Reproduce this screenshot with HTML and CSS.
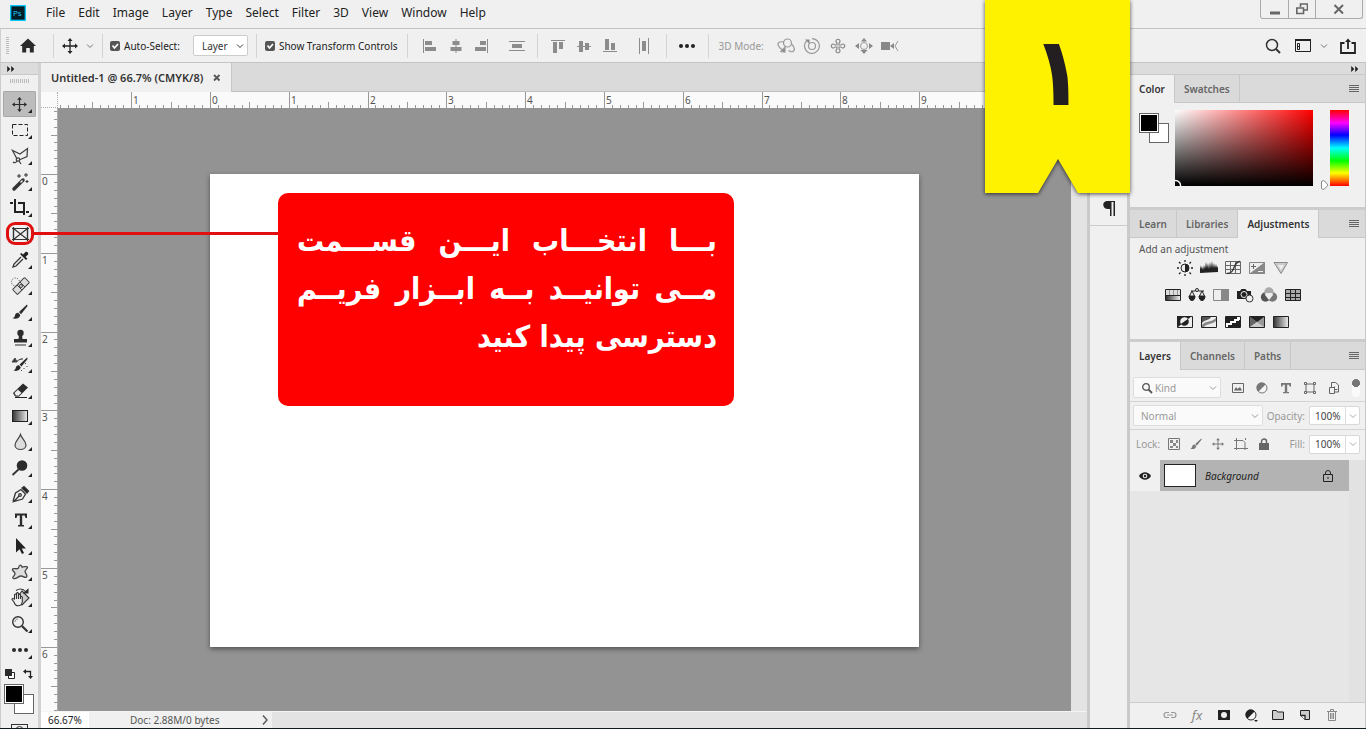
FILE: index.html
```html
<!DOCTYPE html>
<html lang="en">
<head>
<meta charset="utf-8">
<title>Untitled-1 @ 66.7% (CMYK/8)</title>
<link rel="stylesheet" href="styles.css">
</head>
<body>
<svg class="defs" aria-hidden="true">
  <defs>
    <linearGradient id="fade"><stop offset="0" stop-color="#333"/><stop offset="1" stop-color="#eee"/></linearGradient>
    <symbol id="chev" viewBox="0 0 8 8"><path d="M1 2.5 4 5.5 7 2.5" fill="none" stroke="currentColor"/></symbol>
    <symbol id="burger" viewBox="0 0 10 8"><path d="M0 .5h10M0 2.5h10M0 4.5h10M0 6.5h10" stroke="#666"/></symbol>
    <symbol id="twin" viewBox="0 0 8 6"><path d="M.5.5 3 3 .5 5.5zM4.500.5 7 3 4.500 5.500z" fill="#222" stroke="#222" stroke-width=".6"/></symbol>
    <symbol id="move" viewBox="0 0 16 16"><path d="M8 2v12M2 8h12" stroke="currentColor" stroke-width="1.3"/><path d="M8 0 10.500 3h-5zM8 16l2.500-3h-5zM0 8l3-2.500v5zM16 8l-3-2.500v5z" fill="currentColor"/></symbol>
    <symbol id="brush" viewBox="0 0 16 16"><path d="M15 .5 7 8l2 2.200L15.600 2zM6.300 8.800c-1.800-.2-3 1-3.300 2.600C2.700 13 1.800 13.700.5 14c2 1.600 7 1 7.800-3z" fill="currentColor"/></symbol>
    <symbol id="half" viewBox="0 0 12 12"><circle cx="6" cy="6" r="5" fill="#f4f4f4" stroke="currentColor"/><path d="M9.500 2.500A5 5 0 1 0 2.500 9.500z" fill="currentColor"/></symbol>
    <symbol id="check" viewBox="0 0 10 10"><path d="M2.500 4.500 4.500 7 8 3" fill="none" stroke="#fff" stroke-width="1.700"/></symbol>
  </defs>
</svg>

<header class="menubar">
  <svg class="logo" viewBox="0 0 16 16"><rect x=".7" y=".7" width="14.600" height="14.600" fill="#001d26" stroke="#00c8ff" stroke-width="1.300"/><text x="3" y="11" class="logo-text">Ps</text></svg>
  <nav class="menu">
    <a href="#">File</a><a href="#">Edit</a><a href="#">Image</a><a href="#">Layer</a><a href="#">Type</a><a href="#">Select</a><a href="#">Filter</a><a href="#">3D</a><a href="#">View</a><a href="#">Window</a><a href="#">Help</a>
  </nav>
  <div class="winctl">
    <button class="w-min" aria-label="Minimize"><svg width="12" height="12"><path d="M1 8.500h10v3H1z" fill="#666"/></svg></button>
    <button class="w-max" aria-label="Restore"><svg width="12" height="12" fill="none" stroke="#666" stroke-width="1.600"><path d="M4.500 4V1h7v6H8"/><path d="M.8 5h6.700v5.500H.8z"/></svg></button>
    <button class="w-close" aria-label="Close"><svg width="12" height="12"><path d="M1.500 2 10 10.500M10 2 1.500 10.500" stroke="#666" stroke-width="2"/></svg></button>
  </div>
</header>

<section class="options">
  <div class="grip-v"></div>
  <button class="ib home" aria-label="Home"><svg width="16" height="15"><path d="M8 .5 0 8h2.200v6.500h4V10h3.600v4.500h4V8H16z" fill="#2b2b2b"/></svg></button>
  <i class="sep s1"></i>
  <button class="ib preset" aria-label="Move tool preset"><svg width="16" height="16"><use href="#move"/></svg><svg class="grey" width="8" height="8"><use href="#chev"/></svg></button>
  <i class="sep s2"></i>
  <label class="check"><input type="checkbox" checked><svg width="10" height="10"><use href="#check"/></svg><span>Auto-Select:</span></label>
  <div class="select layer-select"><select aria-label="Auto-Select"><option>Layer</option></select><svg width="8" height="8"><use href="#chev"/></svg></div>
  <i class="sep s3"></i>
  <label class="check"><input type="checkbox" checked><svg width="10" height="10"><use href="#check"/></svg><span>Show Transform Controls</span></label>
  <i class="sep s4"></i>
  <div class="group align">
    <button class="ib" aria-label="Align left"><svg width="16" height="16" fill="#8c8c8c"><path d="M1 1h1v14H1zM3 3h7v4H3zM3 9h11v4H3z"/></svg></button>
    <button class="ib" aria-label="Align centers"><svg width="16" height="16" fill="#8c8c8c"><path d="M7.500 1h1v14h-1zM4.500 3h7v4h-7zM2.500 9h11v4h-11z"/></svg></button>
    <button class="ib" aria-label="Align right"><svg width="16" height="16" fill="#8c8c8c"><path d="M13 1h1v14h-1zM6 3h6v4H6zM1 9h11v4H1z"/></svg></button>
  </div>
  <button class="ib" aria-label="Distribute vertically"><svg width="16" height="16" fill="#8c8c8c"><path d="M0 3h16v1H0zM0 12h16v1H0zM3 6h10v4H3z"/></svg></button>
  <i class="sep s5"></i>
  <div class="group align">
    <button class="ib" aria-label="Align top"><svg width="16" height="16" fill="#8c8c8c"><path d="M1 2h14v1H1zM3 4h4v11H3zM9 4h4v7H9z"/></svg></button>
    <button class="ib" aria-label="Align middles"><svg width="16" height="16" fill="#8c8c8c"><path d="M1 8h14v1H1zM3 3h4v11H3zM9 5h4v7H9z"/></svg></button>
    <button class="ib" aria-label="Align bottom"><svg width="16" height="16" fill="#8c8c8c"><path d="M1 13h14v1H1zM3 1h4v11H3zM9 5h4v7H9z"/></svg></button>
  </div>
  <button class="ib dist" aria-label="Distribute horizontally"><svg width="16" height="16" fill="#8c8c8c"><path d="M3 0h1v16H3zM12 0h1v16h-1zM6 3h4v10H6z"/></svg></button>
  <i class="sep s6"></i>
  <button class="ib" aria-label="More options"><svg width="18" height="16" fill="#222"><circle cx="3" cy="8" r="2"/><circle cx="9" cy="8" r="2"/><circle cx="15" cy="8" r="2"/></svg></button>
  <i class="sep s7"></i>
  <span class="mode">3D Mode:</span>
  <div class="group modes">
    <button class="ib" aria-label="Orbit 3D"><svg width="18" height="16" fill="none" stroke="#999" stroke-width="1.200"><circle cx="10.500" cy="5" r="4"/><path d="M6.500 4C2 3 0 5 1.500 8c1 2 3 3.500 5 4.500M14.500 6c3 3 3.500 5.500 2 7-1 1-3.500.5-5-.5"/><path d="M4 13.500 8 9v5z" fill="#888"/></svg></button>
    <button class="ib" aria-label="Roll 3D"><svg width="18" height="16" fill="none" stroke="#999" stroke-width="1.200"><circle cx="9" cy="8" r="3.500"/><path d="M3.500 3A7.400 7.400 0 1 0 9 .6"/><path d="M2 1.500h4.500V6z" fill="#888" stroke="none"/></svg></button>
    <button class="ib" aria-label="Pan 3D"><svg width="18" height="16" fill="none" stroke="#888" stroke-width="1.200"><path d="M8 7V5a2 2 0 1 1 2 0v2h2a2 2 0 1 1 0 2h-2v2a2 2 0 1 1-2 0V9H6a2 2 0 1 1 0-2z"/></svg></button>
    <button class="ib" aria-label="Slide 3D"><svg width="18" height="16" fill="#888"><circle cx="9" cy="8" r="3.500" fill="none" stroke="#999"/><path d="M9 0l3 3.500H6zM9 16l3.500-4h-7zM0 8l4-3v6zM18 8l-4-3v6z"/></svg></button>
    <button class="ib" aria-label="Zoom 3D"><svg width="18" height="16" fill="#888"><path d="M0 4h9v8H0zM9 8l4-3v6z"/><path d="m17 3-3 5 3 5" fill="none" stroke="#999"/></svg></button>
  </div>
  <div class="right-tools">
    <button class="ib" aria-label="Search"><svg width="16" height="16" fill="none" stroke="#333"><circle cx="7" cy="7" r="5.500" stroke-width="1.500"/><path d="m11 11 4 4" stroke-width="2"/></svg></button>
    <button class="ib" aria-label="Workspace"><svg width="16" height="14" fill="none" stroke="#222"><path d="M.5 1.500h15v11H.5z"/><path d="M0 1h16" stroke-width="2"/><path d="M2.500 4.500h2v6h-2zM2.500 7.500h2"/></svg><svg class="grey" width="8" height="8"><use href="#chev"/></svg></button>
    <button class="ib" aria-label="Share"><svg width="16" height="16" fill="none" stroke="#222" stroke-width="1.800"><path d="M4.500 5H1v10h14V5h-3.500M8 11V2"/><path d="M5 4l3-3.500L11 4z" fill="#222" stroke="none"/></svg></button>
  </div>
</section>

<main class="work">
  <aside class="toolbar">
    <div class="strip"><svg width="8" height="6"><use href="#twin"/></svg></div>
    <div class="grip-h"></div>
    <div class="tools">
      <button class="tool on" aria-label="Move"><svg viewBox="0 0 20 20"><use href="#move" x="2" y="3" width="15" height="15"/></svg></button>
      <button class="tool" aria-label="Marquee"><svg viewBox="0 0 20 20"><rect x="2.500" y="4.500" width="15" height="11" fill="none" stroke="#222" stroke-dasharray="4 2"/></svg></button>
      <button class="tool" aria-label="Lasso"><svg viewBox="0 0 20 20" fill="none" stroke="#444" stroke-width="1.300"><path d="M7 13 2.500 4.500 10 8l7.500-5.500-.5 8L9 14"/><circle cx="8" cy="13.500" r="1.700"/><path d="M7 15c-1 2-3 2-4 1M9 15l2 3"/></svg></button>
      <button class="tool" aria-label="Magic wand"><svg viewBox="0 0 20 20"><path d="M4 17 13 8" stroke="#333" stroke-width="3.500" stroke-linecap="round"/><path d="m10.500 10.500 2-2" stroke="#eee" stroke-width="1.500"/><path d="M9 2v4M7 4h4M16 1v4M14 3h4M17 8v3M15.500 9.500h3" stroke="#333"/></svg></button>
      <button class="tool" aria-label="Crop"><svg viewBox="0 0 20 20" fill="none" stroke="#222" stroke-width="2"><path d="M0 5h3M5 1v13h9M8 5h6v12M16 14h3"/></svg></button>
      <button class="tool framed" aria-label="Frame"><svg viewBox="0 0 20 20" fill="none" stroke="#333" stroke-width="1.200"><path d="M3.500 4.500h14v11h-14zM3.500 4.500l14 11M17.500 4.500l-14 11"/><path d="M2 4.500h17M2 15.500h17M3.500 3v14M17.500 3v14"/></svg></button>
      <button class="tool" aria-label="Eyedropper"><svg viewBox="0 0 20 20"><path d="M11 7 4 14l-1 3 3-1 7-7" fill="#eee" stroke="#333" stroke-width="1.300"/><path d="m10 4 6 6 1.500-1.500L15.500 7 18 4.500C19 3 17 1 15.500 2L13 4.500 11.500 3z" fill="#222"/></svg></button>
      <button class="tool" aria-label="Healing brush"><svg viewBox="0 0 20 20" fill="none" stroke="#444"><rect x="2.500" y="6.500" width="17" height="7" rx="1" transform="rotate(-45 11 10)" fill="#ddd"/><path d="m7 9 5 5M10 6l5 5" /><circle cx="11" cy="10" r="1.500"/><circle cx="5.500" cy="6" r="4" stroke-dasharray="1 1.500"/></svg></button>
      <button class="tool" aria-label="Brush"><svg viewBox="0 0 20 20"><use href="#brush" x="2" y="2" width="16" height="16"/></svg></button>
      <button class="tool" aria-label="Clone stamp"><svg viewBox="0 0 20 20" fill="#2b2b2b"><circle cx="10.500" cy="5" r="3.200"/><path d="M9 7h3l.5 4H17v3.500H4V11h4.500zM5 16.500h11v1H5z"/></svg></button>
      <button class="tool" aria-label="History brush"><svg viewBox="0 0 20 20"><use href="#brush" x="3" y="3" width="15" height="15"/><path d="M3 7.500h4c2-2 4-3 6-2.500M2 8l3-4 2 4zM15.500 9v1M17 12v1M14 14v1M11 16.500h1" fill="#333" stroke="#444"/></svg></button>
      <button class="tool" aria-label="Eraser"><svg viewBox="0 0 20 20"><path d="m3 13 10-9.500 5 4-9 9H5z" fill="#2b2b2b"/><path d="m4 13 4-3.700L12 13l-3.500 3H6z" fill="#eee" stroke="#444"/><path d="M5 17.500h12" stroke="#222"/></svg></button>
      <button class="tool" aria-label="Gradient"><svg viewBox="0 0 20 20"><rect x="2.500" y="4.500" width="15" height="11" fill="url(#fade)" stroke="#222"/></svg></button>
      <button class="tool" aria-label="Blur"><svg viewBox="0 0 20 20"><path d="M10.500 2.500C9 7 5 9.500 5 13c0 6 11 6 11 0 0-3.500-4-6-5.500-10.500z" fill="#ddd" stroke="#444" stroke-width="1.200"/></svg></button>
      <button class="tool" aria-label="Dodge"><svg viewBox="0 0 20 20"><circle cx="12" cy="7.500" r="5.300" fill="#2b2b2b"/><path d="m9 11-6.500 6" stroke="#333" stroke-width="1.800"/></svg></button>
      <button class="tool" aria-label="Pen"><svg viewBox="0 0 20 20" fill="none" stroke="#333" stroke-width="1.300"><path d="M3 17.500 5.500 9 11 5.500 15.500 10 12.500 15 4 17.500l5-5.500"/><circle cx="10" cy="11" r="1.300"/><path d="m12 4 5 5 1.500-2-4.500-4.500z" fill="#222"/></svg></button>
      <button class="tool" aria-label="Type"><svg viewBox="0 0 20 20"><path d="M5 3.500h12V8h-1.500l-.8-2.500h-2.500V15H14v1.500H8V15h1.800V5.500H7.300L6.500 8H5z" fill="#2b2b2b"/></svg></button>
      <button class="tool" aria-label="Path selection"><svg viewBox="0 0 20 20"><path d="M6 2v14.500l3.500-3.200L12 18l2-1-2.200-4.500H16z" fill="#222"/></svg></button>
      <button class="tool" aria-label="Custom shape"><svg viewBox="0 0 20 20"><path d="M8.500 6C9 3 11 2 12 5c3 0 5-1 5.500 0S15 8 15 9.500c1 3 3 4 1.500 5.500s-3-1-5.500-1-5 3.500-7.500 2.500 2-3 1.500-5S1.500 8.500 2.500 7s4 1 6-1z" fill="#ddd" stroke="#444" stroke-width="1.300"/></svg></button>
      <button class="tool" aria-label="Rotate view"><svg viewBox="0 0 20 20" fill="#f0f0f0" stroke="#333" stroke-width="1.100"><path d="m12 3 7 7-7 7-6-6z" fill="#ccc"/><path d="M4 14 2 11.500c0-1.500 2-1 2.500 0V7c.5-1.500 1.800-1 2 0V5.500c.5-1.300 1.800-1 2 0V7c.5-1 1.800-.8 2 0v2c.7-.8 1.700-.5 1.800.5V14c-1 5-7 5-8.300 0z"/><path d="M6.500 7v4M8.500 7v4M10.500 8.500V11" /><path d="M6 2.500C9 .5 13 .5 16 4" fill="none"/><path d="M18 1.500V5h-4z" fill="#222"/></svg></button>
      <button class="tool" aria-label="Zoom"><svg viewBox="0 0 20 20" fill="none" stroke="#333"><circle cx="8" cy="8" r="5.300" stroke-width="1.400"/><path d="M5 8c0-2 1-3 3-3" stroke="#888"/><path d="m12 12 5.500 5.500" stroke-width="2.200"/></svg></button>
      <button class="tool" aria-label="Edit toolbar"><svg viewBox="0 0 20 20" fill="#2b2b2b"><circle cx="4" cy="10" r="2"/><circle cx="10" cy="10" r="2"/><circle cx="16" cy="10" r="2"/></svg></button>
    </div>
    <div class="mini">
      <button class="ib" aria-label="Default colors"><svg width="10" height="10"><path d="M3.500 3.500h6v6h-6z" fill="#fff" stroke="#222"/><path d="M0 0h7v7H0z" fill="#2b2b2b"/></svg></button>
      <button class="ib" aria-label="Swap colors"><svg width="10" height="10"><path d="M2 2.500h5.500V8" fill="none" stroke="#222" stroke-width="1.300"/><path d="M0 2.500 3 0v5zM7.500 10 5 7h5z" fill="#222"/></svg></button>
    </div>
    <div class="chips tool-chips"><button class="chip back" aria-label="Background color"></button><button class="chip fore" aria-label="Foreground color"></button></div>
    <button class="ib quick" aria-label="Quick mask"><svg width="17" height="12" fill="none" stroke="#333"><rect x=".5" y=".5" width="16" height="11"/><circle cx="8.500" cy="6" r="3.500"/></svg></button>
  </aside>

  <section class="document">
    <div class="doc-tabs"><div class="doc-tab"><span>Untitled-1 @ 66.7% (CMYK/8)</span><button class="ib" aria-label="Close document"><svg width="8" height="8"><path d="m1 1 5.500 5.500M6.500 1 1 6.500" stroke="#555" stroke-width="1.800"/></svg></button></div></div>
    <div class="corner"></div>
    <svg class="ruler-h" id="ruler-h"></svg>
    <svg class="ruler-v" id="ruler-v"></svg>
    <div class="canvas">
      <div class="page"><p class="callout" lang="fa" dir="rtl"><span class="full">بـــا انتخـــاب ایـــن قســـمت</span><span class="full">مــی توانیــد بــه ابــزار فریــم</span><span>دسترسی پیدا کنید</span></p></div>
    </div>
    <div class="scroll-v"></div>
    <footer class="status"><span class="zoom">66.67%</span><span class="info">Doc: 2.88M/0 bytes</span><button class="ib more" aria-label="Status menu"><svg width="8" height="10"><path d="m2 0.500 4 4.500-4 4.500" fill="none" stroke="#555" stroke-width="1.400"/></svg></button></footer>
  </section>

  <aside class="dock"><div class="strip"></div><div class="dock-group"><button class="ib" aria-label="Paragraph"><svg width="14" height="16"><path d="M7 1h6v15h-1.500V2H9.500v14H8V9H6C0 9-.5 1 5.500 1z" fill="#222"/></svg></button></div></aside>

  <aside class="panels">
    <div class="strip end"><svg width="8" height="6"><use href="#twin"/></svg></div>
    <section class="panel">
      <div class="tabs"><button class="tab on">Color</button><button class="tab">Swatches</button><button class="ib burger" aria-label="Color menu"><svg width="10" height="8"><use href="#burger"/></svg></button></div>
      <div class="color-body">
        <div class="chips"><button class="chip back" aria-label="Background"></button><button class="chip fore" aria-label="Foreground"></button></div>
        <div class="field"><svg width="8" height="8"><path d="M0 2.500A5 5 0 0 1 5.500 8" fill="none" stroke="#fff" stroke-width="1.500"/></svg></div>
        <svg class="pointer" width="8" height="10"><path d="M.5 1.500Q2 0 3.500 1L7 5 3.500 9Q2 10 .5 8.500z" fill="#fff" stroke="#888"/></svg>
        <div class="hue"></div>
      </div>
    </section>
    <section class="panel">
      <div class="tabs"><button class="tab">Learn</button><button class="tab">Libraries</button><button class="tab on">Adjustments</button><button class="ib burger" aria-label="Adjustments menu"><svg width="10" height="8"><use href="#burger"/></svg></button></div>
      <div class="adjust">
        <p>Add an adjustment</p>
        <div class="adj-row">
          <button class="ib" aria-label="Brightness"><svg width="18" height="16"><circle cx="9" cy="8" r="4" fill="#eee" stroke="#222"/><path d="M9 4a4 4 0 0 1 0 8z" fill="#222"/><path d="M9 0v2M9 14v2M1 8h2M15 8h2M3 2l1.500 1.500M15 2l-1.500 1.500M3 14l1.500-1.500M15 14l-1.500-1.500" stroke="#222" stroke-width="1.300"/></svg></button>
          <button class="ib" aria-label="Levels"><svg width="18" height="16"><path d="M0 13V5l1 4 1-3 1 4 1-5 1 4 1-7 1 6 1-5 1 6 1-7 1 6 1-7 1 7 1-5 1 5 1-4 1 4 1-2v6z" fill="#222"/></svg></button>
          <button class="ib" aria-label="Curves"><svg width="18" height="16" fill="none" stroke="#666"><path d="M1.500 1.500h15v12h-15zM6.500 1v13M11.500 1v13M1 5.500h16M1 9.500h16"/><path d="M3 13.500c9 0 5-11 13-12" stroke="#333" stroke-width="1.300"/></svg></button>
          <button class="ib" aria-label="Exposure"><svg width="18" height="16"><path d="M1.500 2.500h15v11h-15z" fill="#eee" stroke="#888"/><path d="M17 2v12H1z" fill="#888"/><path d="M3 6.500h5M5.500 4v5" stroke="#666"/><path d="M10 11.500h5" stroke="#eee"/></svg></button>
          <button class="ib" aria-label="Vibrance"><svg width="18" height="16"><path d="M2 2.500h13.500L9 13.500z" fill="#ccc" stroke="#888"/><path d="M6 5h6L9 10z" fill="#eee"/></svg></button>
        </div>
        <div class="adj-row">
          <button class="ib" aria-label="Hue"><svg width="18" height="16"><path d="M1.500 2.500h15v11h-15z" fill="#ddd" stroke="#222"/><path d="M2 9h14v4H2z" fill="url(#fade)"/><path d="M1 8.500h16" stroke="#222"/><path d="M5.500 3v5M9.500 3v5M13.500 3v5" stroke="#999"/></svg></button>
          <button class="ib" aria-label="Color balance"><svg width="18" height="16" fill="none" stroke="#222"><circle cx="9" cy="3" r="1.500"/><path d="M3 4h4.500M10.500 4H16M4 4 1.500 9M4 4l2.500 5M14 4l-2.500 5M14 4l2.500 5"/><path d="M1 9h6c0 6-6 6-6 0zM11 9h6c0 6-6 6-6 0z" fill="#222"/></svg></button>
          <button class="ib" aria-label="Black and white"><svg width="18" height="16"><path d="M1.500 2.500h15v11h-15z" fill="#eee" stroke="#888"/><path d="M9 2h8v12H9z" fill="#888"/></svg></button>
          <button class="ib" aria-label="Photo filter"><svg width="18" height="16"><path d="M1 4h3l1.500-2h4L11 4h4v8H1z" fill="#222"/><circle cx="8" cy="7.500" r="3" fill="#222" stroke="#eee"/><circle cx="13.500" cy="11.500" r="3.500" fill="#eee" stroke="#333"/></svg></button>
          <button class="ib" aria-label="Channel mixer"><svg width="18" height="16"><circle cx="5.500" cy="10" r="4.700" fill="#555"/><circle cx="12.500" cy="10" r="4.700" fill="#777"/><circle cx="9" cy="5" r="4.700" fill="#aaa"/><path d="M6 6h6l1 2-4 5-4-5z" fill="#eee"/></svg></button>
          <button class="ib" aria-label="Color lookup"><svg width="18" height="16"><path d="M1.500 2.500h15v11h-15z" fill="#aaa" stroke="#222"/><path d="M6.500 2v12M11.500 2v12M1 6.500h16M1 10.500h16" stroke="#222"/></svg></button>
        </div>
        <div class="adj-row">
          <button class="ib" aria-label="Invert"><svg width="18" height="16"><path d="M1.500 2.500h15v11h-15z" fill="#eee" stroke="#222"/><path d="M1 2h15L2 13z" fill="#222"/><path d="M5 10A4 4 0 0 1 12 5z" fill="#eee"/><path d="M5 10A4 4 0 0 0 12 5z" fill="#222"/></svg></button>
          <button class="ib" aria-label="Posterize"><svg width="18" height="16"><path d="M1.500 2.500h15v11h-15z" fill="#eee" stroke="#222"/><path d="M2 3h9C9 7 5 5 2 9z" fill="#555"/><path d="M2 11C6 6 11 9 16 4v3C12 11 7 9 4 13H2z" fill="#888"/></svg></button>
          <button class="ib" aria-label="Threshold"><svg width="18" height="16"><path d="M1.500 2.500h15v11h-15z" fill="#fff" stroke="#222"/><path d="M2 3h11v2h-3v2H6v2H2zM16 6v7H4v-2h4V9h4V7h3V6z" fill="#222"/></svg></button>
          <button class="ib" aria-label="Selective color"><svg width="18" height="16"><path d="M1.500 2.500h15v11h-15z" fill="#999" stroke="#222"/><path d="M2 3h14L9 8z" fill="#222"/><path d="M2 3l7 5-7 5z" fill="#666"/><path d="m2 13 7-5 7 5z" fill="#ccc"/></svg></button>
          <button class="ib" aria-label="Gradient map"><svg width="18" height="16"><path d="M1.500 2.500h15v11h-15z" fill="url(#fade)" stroke="#222"/></svg></button>
        </div>
      </div>
    </section>
    <section class="panel layers">
      <div class="tabs"><button class="tab on">Layers</button><button class="tab">Channels</button><button class="tab">Paths</button><button class="ib burger" aria-label="Layers menu"><svg width="10" height="8"><use href="#burger"/></svg></button></div>
      <div class="row filter">
        <div class="select kind"><svg width="12" height="12" fill="none" stroke="#555"><circle cx="5" cy="5" r="3.300" stroke-width="1.300"/><path d="m7.500 7.500 3.500 3.500" stroke-width="1.800"/></svg><select aria-label="Filter type"><option>Kind</option></select><svg width="8" height="8"><use href="#chev"/></svg></div>
        <div class="filter-icons">
          <button class="ib" aria-label="Pixel"><svg width="12" height="12"><path d="M.5 1.500h11v9H.5z" fill="none" stroke="#666"/><path d="M2 8.500 4 5l1.500 2L8 5l2 3.500z" fill="#666"/></svg></button>
          <button class="ib" aria-label="Adjustment"><svg width="12" height="12"><use href="#half"/></svg></button>
          <button class="ib" aria-label="Type layers"><svg width="12" height="12"><path d="M1 1h10v3.500H9.500L9 2.700H7.200V10H9v1.300H3V10h1.800V2.700H3l-.5 1.800H1z" fill="#777"/></svg></button>
          <button class="ib" aria-label="Shape layers"><svg width="12" height="12" fill="#f0f0f0" stroke="#666"><path d="M2 2h8v8H2z"/><path d="M.5.5h2v2h-2zM9.500.5h2v2h-2zM.5 9.500h2v2h-2zM9.500 9.500h2v2h-2z"/></svg></button>
          <button class="ib" aria-label="Smart objects"><svg width="12" height="12" fill="#f0f0f0" stroke="#666"><path d="M3.500.5h4L10.500 3v7h-7z"/><path d="M1.500 5.500h5v6h-5zM6.500 4.500v3h3"/></svg></button>
        </div>
        <button class="toggle" aria-label="Toggle filter"></button>
      </div>
      <div class="row">
        <div class="select blend"><select aria-label="Blend mode"><option>Normal</option></select><svg width="8" height="8"><use href="#chev"/></svg></div>
        <label class="fld" for="op">Opacity:</label>
        <div class="num"><input id="op" value="100%"><button class="ib" aria-label="Opacity slider"><svg width="8" height="8"><use href="#chev"/></svg></button></div>
      </div>
      <div class="row lock">
        <span>Lock:</span>
        <div class="lock-icons">
          <button class="ib" aria-label="Lock transparency"><svg width="12" height="12"><path d="M.5.5h11v11H.5z" fill="none" stroke="#777"/><path d="M2 2h3v3H2zM8 2h2v3H8zM5 5h3v3H5zM2 8h3v2H2zM8 8h2v2H8z" fill="#888"/></svg></button>
          <button class="ib" aria-label="Lock pixels"><svg width="12" height="14"><use href="#brush"/></svg></button>
          <button class="ib" aria-label="Lock position"><svg width="12" height="12"><use href="#move"/></svg></button>
          <button class="ib" aria-label="Lock artboard"><svg width="14" height="12" fill="none" stroke="#777"><path d="M2.500 0v12M0 2.500h9l2 2V12M0 10.500h14M11.500 0v2"/></svg></button>
          <button class="ib" aria-label="Lock all"><svg width="12" height="12"><path d="M1 5h10v7H1z" fill="#666"/><path d="M3.500 6V3.500a2.500 2.500 0 0 1 5 0V6" fill="none" stroke="#666" stroke-width="1.500"/></svg></button>
        </div>
        <label class="fld" for="fill">Fill:</label>
        <div class="num"><input id="fill" value="100%"><button class="ib" aria-label="Fill slider"><svg width="8" height="8"><use href="#chev"/></svg></button></div>
      </div>
      <div class="list">
        <div class="layer">
          <button class="ib eye" aria-label="Visibility"><svg width="12" height="8"><path d="M0 4C3-1 9-1 12 4 9 9 3 9 0 4z" fill="#222"/><circle cx="6" cy="4" r="2.300" fill="#eee"/><circle cx="6" cy="4" r="1.200" fill="#222"/></svg></button>
          <div class="layer-main"><span class="thumb"></span><span class="layer-name">Background</span><svg width="10" height="12"><path d="M.5 4.500h9v7h-9z" fill="none" stroke="#222"/><path d="M2.500 4.500V3a2.500 2.500 0 0 1 5 0v1.500M5 7v2" fill="none" stroke="#222"/></svg></div>
        </div>
      </div>
      <div class="actions">
        <button class="ib" aria-label="Link layers"><svg width="14" height="12" fill="none" stroke="#999" stroke-width="1.200"><path d="M6 3.500H3.500a2.500 2.500 0 0 0 0 5H6M8 3.500h2.500a2.500 2.500 0 0 1 0 5H8M4 6h6"/></svg></button>
        <button class="ib fx" aria-label="Layer style">fx</button>
        <button class="ib" aria-label="Add mask"><svg width="14" height="12"><path d="M1 1h12v10H1z" fill="#222"/><circle cx="7" cy="6" r="3" fill="#f0f0f0"/></svg></button>
        <button class="ib" aria-label="New adjustment"><svg width="14" height="14"><use href="#half" width="12" height="12" x="1" y="1"/><path d="M10 12h4l-2 2z" fill="#222"/></svg></button>
        <button class="ib" aria-label="New group"><svg width="14" height="12"><path d="M1.500 10.500v-9h4l1 1.500h6v7.500z" fill="#ccc" stroke="#222"/></svg></button>
        <button class="ib" aria-label="New layer"><svg width="14" height="12"><path d="M2.500 1.500h9v9H7L2.500 6.500z" fill="#ccc" stroke="#222"/><path d="M2.500 6.500H7v4" fill="#fff" stroke="#222" stroke-width="1.300"/></svg></button>
        <button class="ib" aria-label="Delete layer"><svg width="14" height="12" fill="none" stroke="#888"><path d="M2 2.500h10M5.500 2V.5h3V2M3.500 3v8.500h7V3M5.500 4v6M7 4v6M8.500 4v6"/></svg></button>
      </div>
    </section>
  </aside>
</main>

<div class="ribbon"><svg viewBox="0 0 145 193"><path d="M0 0h145v193H93L73 159 53 193H0z" fill="#fff200"/></svg><span lang="fa">۱</span></div>
<i class="ring"></i><i class="leader"></i>
<script src="rulers.js"></script>
</body>
</html>
```
FILE: rulers.js
```js
const NS = "http://www.w3.org/2000/svg";
const UNIT = 78.8;

function drawRuler(id, origin, vertical) {
  const svg = document.getElementById(id);
  const box = svg.getBoundingClientRect();
  const length = vertical ? box.height : box.width;
  const add = (tag, attrs, text) => {
    const el = document.createElementNS(NS, tag);
    for (const k in attrs) el.setAttribute(k, attrs[k]);
    if (text !== undefined) el.textContent = text;
    svg.appendChild(el);
  };
  svg.replaceChildren();
  for (let i = -30; ; i++) {
    const p = Math.round(origin + i * UNIT / 10);
    if (p > length) break;
    if (p < 0) continue;
    const size = i % 10 === 0 ? 16 : i % 5 === 0 ? 6 : 3;
    add("rect", vertical
      ? { x: 16 - size, y: p, width: size, height: 1 }
      : { x: p, y: 16 - size, width: 1, height: size });
    if (i % 10 === 0 && p + 14 < length) {
      add("text", vertical ? { x: 1, y: p + 11 } : { x: p + 2, y: 12 }, Math.abs(i / 10));
    }
  }
}

function drawRulers() {
  drawRuler("ruler-h", 152, false);
  drawRuler("ruler-v", 66, true);
}

drawRulers();
window.addEventListener("resize", drawRulers);
```
FILE: styles.css
```css
* { box-sizing: border-box; }
html, body { height: 100%; }
body {
  margin: 0;
  display: flex;
  flex-direction: column;
  position: relative;
  overflow: hidden;
  background: #f0f0f0;
  border-bottom: 1px solid #101c20;
  font: 10px/14px "Noto Sans", "Open Sans", sans-serif;
  color: #333;
}
button, input, select { font: inherit; color: inherit; }
button { padding: 0; border: 0; background: none; }
svg { display: block; flex: none; }
.defs { position: absolute; width: 0; height: 0; }
.ib { display: flex; align-items: center; justify-content: center; color: #222; flex: none; }
.grey { color: #777; }

/* Menu bar */
.menubar { display: flex; flex: none; height: 29px; border-bottom: 1px solid #c4c4c4; padding: 0 3px 0 10px; align-items: flex-start; }
.logo { width: 16px; height: 16px; margin-top: 5px; }
.logo-text { font: 8px "Open Sans", sans-serif; fill: #26c9ff; }
.menu { display: flex; gap: 13px; margin: 5px auto 0 20px; font-size: 12px; line-height: 16px; }
.menu a { color: #222; text-decoration: none; }
.winctl { display: flex; height: 19px; border: 1px solid #aaa; border-top: 0; border-radius: 0 0 3px 3px; }
.winctl button { display: flex; align-items: center; justify-content: center; width: 27px; }
.winctl button + button { border-left: 1px solid #aaa; }
.winctl .w-close { width: 47px; }

/* Options bar */
.options { display: flex; flex: none; align-items: center; height: 34px; border-bottom: 1px solid #c4c4c4; padding: 0 10px 0 5px; border-left: 1px solid #d0d0d0; }
.grip-v { width: 3px; height: 18px; background: repeating-linear-gradient(#bbb 0 1px, #f0f0f0 1px 2px); margin-right: 11px; }
.sep { width: 1px; height: 24px; background: #d4d4d4; flex: none; }
.s1 { margin: 0 8px 0 17px; }
.s2 { margin: 0 7px 0 8px; }
.s3 { margin: 0 8px; }
.s4 { margin: 0 14px 0 9px; }
.s5 { margin: 0 12px; }
.s6 { margin: 0 11px 0 14px; }
.s7 { margin: 0 10px 0 12px; }
.preset { gap: 8px; }
.check { display: flex; align-items: center; gap: 4px; color: #222; }
.check input { appearance: none; margin: 0; width: 10px; height: 10px; border-radius: 2px; background: #555; }
.check svg { margin-left: -14px; pointer-events: none; }
.select { display: flex; align-items: center; background: #fafafa; border: 1px solid #ccc; border-radius: 2px; }
.select select { appearance: none; border: 0; background: none; padding: 0; margin: 0; flex: 1; min-width: 0; outline: 0; }
.layer-select { width: 55px; height: 21px; margin-left: 13px; padding: 0 3px 0 8px; background: #fff; color: #333; }
.group { display: flex; }
.align { gap: 10px; margin-right: 19px; }
.s5 + .align { margin-right: 18px; }
.mode { color: #999; width: 49px; white-space: nowrap; }
.modes { gap: 8px; margin-left: 9px; }
.right-tools { display: flex; gap: 14px; margin-left: auto; }
.right-tools .ib { gap: 9px; }
.right-tools .ib:last-child { margin-left: -2px; }

/* Workspace */
.work { display: flex; flex: 1; min-height: 0; }
.strip { height: 12px; flex: none; display: flex; align-items: center; background: #dcdcdc; border-bottom: 1px solid #c8c8c8; padding: 0 6px; }
.strip.end { justify-content: flex-end; }

.toolbar { width: 41px; flex: none; display: flex; flex-direction: column; overflow: hidden; border-left: 1px solid #ccc; border-right: 3px solid #d2d2d2; }
.grip-h { height: 4px; width: 19px; margin: 4px 0 8px 9px; flex: none; background: repeating-linear-gradient(90deg, #bbb 0 1px, #f0f0f0 1px 2px); }
.tools { display: flex; flex-direction: column; padding: 0 2px; }
.tool { position: relative; display: flex; justify-content: center; align-items: center; height: 26px; color: #2b2b2b; border-radius: 2px; flex: none; }
.tool svg { width: 20px; height: 20px; }
.tool::after { content: ""; position: absolute; right: 4px; bottom: 4px; border: 2px solid transparent; border-right-color: #222; border-bottom-color: #222; }
.tool.framed::after { display: none; }
.tool.on { background: #bcbcbc; box-shadow: inset 0 0 0 1px #a8a8a8; }
.mini { display: flex; justify-content: space-between; padding: 6px 5px 0 4px; flex: none; }
.chips { display: grid; grid-template-columns: 10px 10px 10px; grid-template-rows: 10px 10px 10px; flex: none; }
.chip { border: 1px solid #666; }
.chip.back { grid-area: 2 / 2 / 4 / 4; background: #fff; }
.chip.fore { grid-area: 1 / 1 / 3 / 3; background: #000; box-shadow: inset 0 0 0 1px #fff; }
.tool-chips { margin: 5px 0 0 3px; }
.quick { margin: 10px auto 0 10px; }

.document {
  flex: 1; min-width: 0;
  display: grid;
  grid-template: 29px 16px minmax(0, 1fr) 17px / 17px minmax(0, 1fr) 16px;
}
.doc-tabs { grid-column: 1 / 4; background: #dadada; border-bottom: 1px solid #c0c0c0; display: flex; }
.doc-tab { display: flex; align-items: center; gap: 10px; padding: 0 10px; background: #f0f0f0; border-right: 1px solid #c8c8c8; margin-bottom: -1px; font-size: 11px; font-weight: 600; white-space: nowrap; }
.corner { background: #fafafa; border: dotted #aaa; border-width: 0 1px 1px 0; }
.ruler-h { grid-column: 2; width: 100%; height: 16px; background: #fafafa; }
.ruler-v { grid-area: 3 / 1; width: 17px; height: 100%; background: #fafafa; border-right: 1px solid #aaa; }
.ruler-h rect, .ruler-v rect { fill: #999; }
.ruler-h text, .ruler-v text { fill: #555; }
.canvas { grid-area: 3 / 2; position: relative; background: #939393; overflow: hidden; }
.page { position: absolute; left: 152px; top: 66px; width: 709px; height: 473px; background: #fff; box-shadow: 0 2px 5px rgba(0, 0, 0, .45); }
.callout {
  position: absolute; left: 68px; top: 19px; margin: 0;
  width: 456px; height: 213px; padding: 24px 17px 0 19px;
  border-radius: 10px; background: #f00; color: #fff;
  font: bold 30px/48px "DejaVu Sans Condensed", "DejaVu Sans", sans-serif;
}
.callout span { display: block; white-space: nowrap; }
.callout .full { white-space: normal; text-align: justify; text-align-last: justify; }
.scroll-v { grid-area: 2 / 3 / 4 / 4; background: #e3e3e3; }
.status { grid-area: 4 / 1 / 5 / 4; display: flex; align-items: center; background: #e3e3e3; border-top: 1px solid #f4f4f4; color: #222; }
.status span, .status .more { height: 16px; line-height: 16px; background: #f0f0f0; }
.status .zoom { width: 48px; padding-left: 7px; background: #fff; }
.status .info { width: 169px; padding-left: 41px; color: #555; }
.status .more { width: 14px; }

.dock { width: 43px; flex: none; border: solid #cacaca; border-width: 0 3px; }
.dock-group { height: 151px; border-bottom: 1px solid #ccc; display: flex; align-items: flex-end; justify-content: center; padding-bottom: 9px; }

/* Panels */
.panels { width: 236px; flex: none; display: flex; flex-direction: column; border-right: 1px solid #c8c8c8; }
.tabs { display: flex; flex: none; height: 28px; background: #dadada; border-bottom: 1px solid #c8c8c8; }
.tab { padding: 0 9px; font-weight: 600; color: #666; border-right: 1px solid #c8c8c8; }
.tab.on { background: #f0f0f0; color: #333; margin-bottom: -1px; }
.burger { margin: 0 6px 0 auto; }
.panel + .panel { border-top: 3px solid #ccc; }
.color-body { display: flex; height: 104px; padding: 7px 16px 0 9px; }
.color-body .chips { margin: 3px 6px 0 0; }
.field { flex: 1; height: 76px; display: flex; align-items: flex-end; background: linear-gradient(transparent, #000), linear-gradient(90deg, #fff, #f00); }
.pointer { margin: 70px 1px 0 8px; }
.hue { width: 19px; height: 76px; background: linear-gradient(#f00, #f0f 17%, #00f 33%, #0ff 50%, #0f0 67%, #ff0 83%, #f00); }
.adjust { height: 101px; }
.adjust p { margin: 0; padding: 4px 9px; color: #555; }
.adj-row { display: flex; gap: 6px; justify-content: center; margin-bottom: 11px; padding-right: 30px; }

.layers { flex: 1; display: flex; flex-direction: column; min-height: 0; }
.row { display: flex; align-items: center; height: 28px; flex: none; padding: 0 5px 0 3px; border-bottom: 1px solid #d4d4d4; color: #999; }
.row.filter { height: 32px; padding-top: 4px; }
.row.lock { border: 0; height: 30px; padding: 0 5px 2px 6px; }
.kind { width: 88px; height: 21px; padding: 0 3px 0 7px; gap: 2px; }
.row .select { border-color: #ddd; }
.filter-icons { display: flex; gap: 12px; margin-left: 11px; }
.filter-icons .ib { color: #777; }
.toggle { width: 8px; height: 18px; margin-left: auto; border-radius: 4px; background: radial-gradient(circle at 4px 4px, #777 4px, #fafafa 4px); }
.blend { width: 130px; height: 21px; padding: 0 3px 0 7px; }
.fld { margin-left: auto; padding-right: 4px; }
.num { display: flex; width: 51px; height: 19px; background: #fff; border: 1px solid #d8d8d8; border-radius: 2px; }
.num input { width: 36px; border: 0; border-right: 1px solid #ddd; padding: 0 0 0 5px; background: none; color: #444; outline: 0; }
.num .ib { flex: 1; color: #aaa; }
.lock-icons { display: flex; gap: 10px; margin-left: 8px; }
.lock-icons .ib { color: #777; }
.list { flex: 1; min-height: 0; background: #e6e6e6; border-right: 16px solid #e2e2e2; }
.layer { display: flex; height: 31px; background: #f0f0f0; }
.eye { width: 30px; }
.layer-main { flex: 1; display: flex; align-items: center; background: #b3b3b3; padding: 0 16px 0 4px; color: #222; }
.thumb { width: 32px; height: 23px; background: #fff; border: 1px solid #222; }
.layer-name { margin: 0 auto 0 9px; font-style: italic; }
.actions { display: flex; align-items: center; justify-content: flex-end; gap: 13px; height: 26px; flex: none; padding: 0 26px 2px 0; border-top: 1px solid #ccc; }
.fx { width: 14px; font: italic 13px/14px "Noto Sans", sans-serif; color: #888; }

/* Annotations laid over the workspace */
.ribbon { position: absolute; right: 236px; top: 0; width: 145px; filter: drop-shadow(0 1px 2px rgba(0, 0, 0, .7)); }
.ribbon span { position: absolute; left: 0; right: 0; top: 22px; text-align: center; font: bold 96px/100px "DejaVu Sans Condensed", "DejaVu Sans", sans-serif; color: #231f20; }
.ring { position: absolute; left: 6px; top: 222px; width: 28px; height: 23px; border: 3px solid #e01010; border-radius: 9px; }
.leader { position: absolute; left: 34px; top: 232px; width: 244px; height: 3px; background: #e01010; }
```
